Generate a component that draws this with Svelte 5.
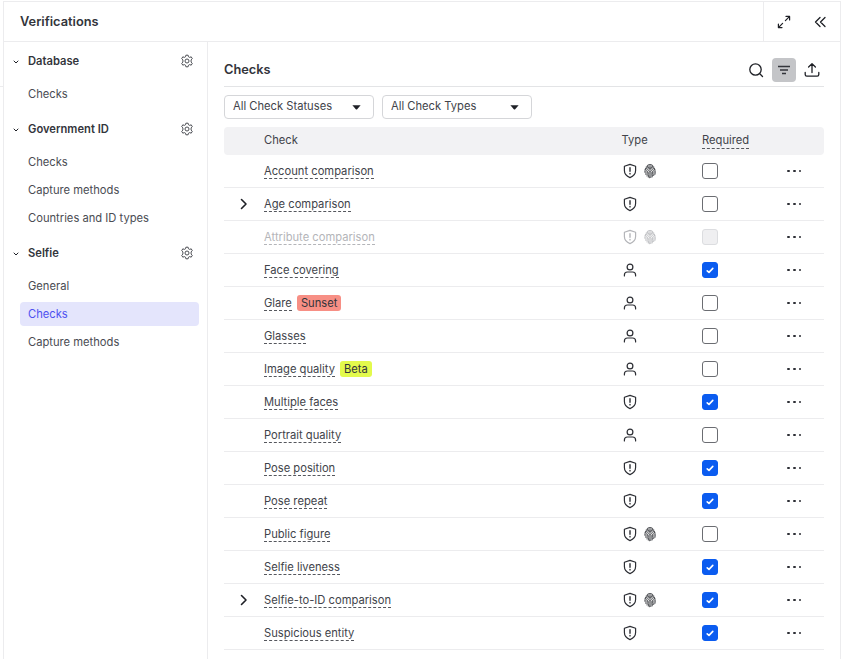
<script>
  const sections = [
    { name: 'Database', items: ['Checks'] },
    { name: 'Government ID', items: ['Checks', 'Capture methods', 'Countries and ID types'] },
    { name: 'Selfie', items: ['General', 'Checks', 'Capture methods'], active: 1 }
  ];
  const rows = [
    { n: 'Account comparison', t: 'sf' },
    { n: 'Age comparison', t: 's', exp: true },
    { n: 'Attribute comparison', t: 'sf', off: true },
    { n: 'Face covering', t: 'p', req: true },
    { n: 'Glare', t: 'p', badge: 'Sunset' },
    { n: 'Glasses', t: 'p' },
    { n: 'Image quality', t: 'p', badge: 'Beta' },
    { n: 'Multiple faces', t: 's', req: true },
    { n: 'Portrait quality', t: 'p' },
    { n: 'Pose position', t: 's', req: true },
    { n: 'Pose repeat', t: 's', req: true },
    { n: 'Public figure', t: 'sf' },
    { n: 'Selfie liveness', t: 's', req: true },
    { n: 'Selfie-to-ID comparison', t: 'sf', req: true, exp: true },
    { n: 'Suspicious entity', t: 's', req: true }
  ];
</script>

{#snippet shield()}
  <svg class="ic" width="16" height="16" viewBox="0 0 16 16" fill="none" stroke="currentColor" stroke-width="1.2" stroke-linejoin="round" stroke-linecap="round">
    <path d="M8 1.4 13.6 3.2V7.6C13.6 11 11.2 13.4 8 14.6 4.8 13.4 2.4 11 2.4 7.6V3.2Z" />
    <path d="M8 4.8V8.2M8 10.4V10.9" stroke-width="1.4" />
  </svg>
{/snippet}
{#snippet finger()}
  <svg class="ic" width="16" height="16" viewBox="0 0 16 16" fill="none" stroke="currentColor" stroke-width="0.8" stroke-linecap="round">
    <path d="M4.4 3.4C5.3 2.2 6.6 1.5 8 1.5S10.7 2.2 11.6 3.4" />
    <path d="M3 6.4C3.7 4.2 5.7 2.9 8 2.9S12.3 4.2 13 6.4" />
    <path d="M2.7 9.2C2.6 6.2 5 4.2 8 4.2S13.4 6.2 13.3 9.2C13.3 10 13.2 10.7 13 11.4" />
    <path d="M3.9 11.6C3.8 10.7 3.9 9.4 4 8.5 4.2 6.7 5.9 5.5 8 5.5S11.8 6.7 12 8.5C12.1 10 12 11.3 11.7 12.6" />
    <path d="M5.1 13.1C5.3 11.5 5.2 10 5.4 8.8 5.6 7.6 6.7 6.8 8 6.8S10.4 7.6 10.6 8.8C10.8 10.6 10.6 12.4 10.2 14" />
    <path d="M6.4 14.2C6.8 12.4 6.6 10.6 6.8 9.2 6.9 8.6 7.4 8.1 8 8.1S9.1 8.6 9.2 9.2C9.4 11 9.2 12.9 8.8 14.6" />
    <path d="M7.6 14.8C8 12.9 8 11 8 9.4" />
  </svg>
{/snippet}
{#snippet person()}
  <svg class="ic" width="16" height="16" viewBox="0 0 16 16" fill="none" stroke="currentColor" stroke-width="1.2" stroke-linecap="round">
    <circle cx="8" cy="5" r="2.9" />
    <path d="M2.4 14V13C2.4 11.2 3.6 10 5.4 10H10.6C12.4 10 13.6 11.2 13.6 13V14" />
  </svg>
{/snippet}
{#snippet gear()}
  <svg width="14" height="14" viewBox="0 0 14 14" fill="none" stroke="#4d4f55" stroke-width="1" stroke-linejoin="round">
    <path d="M5.9 1.2H8.1L8.5 2.8 9.7 3.4 11.2 2.8 12.3 4.7 11.1 5.9V8.1L12.3 9.3 11.2 11.2 9.7 10.6 8.5 11.2 8.1 12.8H5.9L5.5 11.2 4.3 10.6 2.8 11.2 1.7 9.3 2.9 8.1V5.9L1.7 4.7 2.8 2.8 4.3 3.4 5.5 2.8Z" />
    <circle cx="7" cy="7" r="2" />
  </svg>
{/snippet}
{#snippet caret()}
  <svg width="9" height="5" viewBox="0 0 9 5"><path d="M0.4 0.3H8.6L5.2 4.2Q4.5 4.9 3.8 4.2Z" fill="#1e2026" /></svg>
{/snippet}

<div class="page">
  <span class="stray"></span>
  <div class="panel">
    <header class="top">
      <h1>Verifications</h1>
      <div class="top-actions">
        <button aria-label="Expand">
          <svg width="14" height="14" viewBox="0 0 14 14" fill="none" stroke="#1e2026" stroke-width="1.2" stroke-linecap="round" stroke-linejoin="round">
            <path d="M8.4 5.6 12.6 1.4M9 1.4H12.6V5M5.6 8.4 1.4 12.6M1.4 9V12.6H5" />
          </svg>
        </button>
        <button aria-label="Collapse">
          <svg width="14" height="14" viewBox="0 0 14 14" fill="none" stroke="#1e2026" stroke-width="1.3" stroke-linecap="round" stroke-linejoin="round">
            <path d="M7 2.5 2.5 7 7 11.5M12 2.5 7.5 7 12 11.5" />
          </svg>
        </button>
      </div>
    </header>
    <div class="body">
      <aside>
        {#each sections as s}
          <section>
            <div class="sec-head">
              <svg class="chev" width="6" height="4" viewBox="0 0 6 4" fill="none" stroke="#1e2026" stroke-width="1" stroke-linecap="round" stroke-linejoin="round"><path d="M1 1 3 3 5 1" /></svg>
              <strong>{s.name}</strong>
              {@render gear()}
            </div>
            {#each s.items as it, i}
              <div class="nav" class:active={s.active === i}>{it}</div>
            {/each}
          </section>
        {/each}
      </aside>
      <main>
        <div class="title">
          <h2>Checks</h2>
          <div class="tools">
            <span class="tool" aria-label="Search">
              <svg width="16" height="16" viewBox="0 0 16 16" fill="none" stroke="#1e2026" stroke-width="1.3" stroke-linecap="round"><circle cx="7.5" cy="7.5" r="5.7" /><path d="M11.8 11.8 14.5 14.5" /></svg>
            </span>
            <span class="tool on" aria-label="Filter">
              <svg width="14" height="14" viewBox="0 0 14 14" fill="none" stroke="#33353b" stroke-width="1.3"><path d="M1 3.5H13M3 7H11M5 10.5H9" /></svg>
            </span>
            <span class="tool" aria-label="Export">
              <svg width="16" height="16" viewBox="0 0 16 16" fill="none" stroke="#1e2026" stroke-width="1.3" stroke-linecap="round" stroke-linejoin="round"><path d="M8 10.5V1.8M4.6 5 8 1.6 11.4 5M1.2 10.5V12.6C1.2 13.6 1.9 14.2 2.8 14.2H13.2C14.1 14.2 14.8 13.6 14.8 12.6V10.5" /></svg>
            </span>
          </div>
        </div>
        <div class="filters">
          <div class="select"><span class="sel-text">All Check Statuses</span>{@render caret()}</div>
          <div class="select"><span class="sel-text">All Check Types</span>{@render caret()}</div>
        </div>
        <div class="grid thead">
          <span></span>
          <span>Check</span>
          <span>Type</span>
          <span><span class="dash">Required</span></span>
          <span></span>
        </div>
        {#each rows as r}
          <div class="grid row" class:off={r.off}>
            <span class="exp">
              {#if r.exp}
                <svg width="8" height="12" viewBox="0 0 8 12" fill="none" stroke="#1e2026" stroke-width="1.6" stroke-linecap="round" stroke-linejoin="round"><path d="M1.5 1.5 6 6 1.5 10.5" /></svg>
              {/if}
            </span>
            <span class="name">
              <span class="dash">{r.n}</span>
              {#if r.badge}<span class="badge {r.badge.toLowerCase()}">{r.badge}</span>{/if}
            </span>
            <span class="types">
              {#if r.t === 'p'}{@render person()}{:else}{@render shield()}{/if}
              {#if r.t === 'sf'}{@render finger()}{/if}
            </span>
            <span class="reqcell">
              <span class="box" class:checked={r.req} class:dis={r.off}>
                {#if r.req}
                  <svg width="8" height="7" viewBox="0 0 8 7" fill="none" stroke="#fff" stroke-width="1.6" stroke-linecap="round" stroke-linejoin="round"><path d="M1.2 3.8 3 5.4 6.8 1.4" /></svg>
                {/if}
              </span>
            </span>
            <span class="more"><i></i><i></i><i></i></span>
          </div>
        {/each}
      </main>
    </div>
  </div>
</div>

<style>
  :global(body) { margin: 0; background: #fff; }
  .page {
    position: relative;
    width: 841px;
    height: 659px;
    overflow: hidden;
    padding: 1px 0 0 3px;
    box-sizing: border-box;
    font-family: Inter, "Liberation Sans", sans-serif;
    font-size: 11.2px;
    color: #41434a;
  }
  .stray { position: absolute; left: 0; top: 86px; width: 3px; height: 1px; background: #ececee; }
  .panel {
    width: 838px;
    height: 700px;
    box-sizing: border-box;
    border: 1px solid #ececee;
  }
  .top {
    height: 40px;
    box-sizing: border-box;
    display: flex;
    align-items: center;
    justify-content: space-between;
    border-bottom: 1px solid #ececee;
  }
  h1 { margin: 0 0 0 16px; font-size: 12.8px; font-weight: 600; color: #33353b; }
  .top-actions { display: flex; height: 39px; border-left: 1px solid #ececee; width: 77px; box-sizing: border-box; }
  .top-actions button {
    border: 0; background: none; padding: 0; height: 39px; display: flex; align-items: center; justify-content: center;
  }
  .top-actions button:first-child { width: 40px; }
  .top-actions button:last-child { width: 32px; }
  .body { display: flex; height: 660px; }
  aside {
    width: 204px;
    box-sizing: border-box;
    border-right: 1px solid #ececee;
    padding: 7px 0 0 16px;
    flex: none;
  }
  section { margin-bottom: 11px; }
  .sec-head {
    position: relative;
    height: 24px;
    margin-bottom: 9px;
    display: flex;
    align-items: center;
    padding-left: 8px;
    width: 179px;
    box-sizing: border-box;
    justify-content: space-between;
    padding-right: 5px;
  }
  .sec-head strong { font-weight: 600; font-size: 11.2px; color: #33353b; }
  .chev { position: absolute; left: -7px; top: 11px; }
  .nav {
    height: 24px;
    line-height: 24px;
    margin-bottom: 4px;
    padding-left: 8px;
    width: 179px;
    box-sizing: border-box;
    border-radius: 4px;
    color: #4a4c53;
  }
  .nav.active { background: #e4e5fc; color: #4f52f0; }
  main { flex: 1; padding: 0 16px; min-width: 0; }
  .title {
    height: 45px;
    box-sizing: border-box;
    display: flex;
    align-items: center;
    justify-content: space-between;
    border-bottom: 1px solid #e3e4e6;
  }
  h2 { margin: 10px 0 0; font-size: 12.8px; font-weight: 600; color: #33353b; }
  .tools { display: flex; gap: 4px; margin: 12px 0 0; }
  .tool { width: 24px; height: 24px; display: flex; align-items: center; justify-content: center; border-radius: 4px; }
  .tool.on { background: #c4c5c8; }
  .filters { display: flex; gap: 8px; padding-top: 8px; }
  .select {
    width: 150px;
    height: 24px;
    box-sizing: border-box;
    border: 1px solid #d5d6d9;
    border-radius: 4px;
    padding: 0 12px 0 8px;
    display: flex;
    align-items: center;
    justify-content: space-between;
    color: #41434a;
  }
  .sel-text { margin-bottom: 2px; }
  .grid {
    display: grid;
    grid-template-columns: 40px 357.5px 80.5px 74px 48px;
    align-items: center;
  }
  .thead {
    margin-top: 8px;
    height: 28px;
    box-sizing: border-box;
    padding-bottom: 3px;
    background: #f2f2f4;
    border-radius: 4px;
  }
  .row { height: 33px; box-sizing: border-box; border-bottom: 1px solid #ececee; }
  .dash { border-bottom: 1px dashed #55575d; padding-bottom: 1px; }
  .name { display: flex; align-items: center; gap: 5px; }
  .name .dash { padding-bottom: 0; }
  .exp { display: flex; padding-left: 16px; }
  .off .name, .off .types { color: #b4b5b9; }
  .off .dash { border-bottom-color: #b4b5b9; }
  .badge { padding: 0 4px; height: 16px; line-height: 16px; border-radius: 3px; color: #33353b; }
  .sunset { background: #f78f85; }
  .beta { background: #e3fa4c; }
  .types { display: flex; align-items: center; gap: 4px; color: #2c2e34; }
  .ic { display: block; }
  .box {
    display: flex;
    align-items: center;
    justify-content: center;
    width: 16px;
    height: 16px;
    box-sizing: border-box;
    border: 1px solid #6b6d72;
    border-radius: 3px;
  }
  .reqcell { display: block; }
  .checked { background: #0b5cf0; border-color: #0b5cf0; }
  .dis { background: #efeff1; border-color: #dcdde0; }
  .more { display: flex; gap: 3px; padding-left: 11px; }
  .more i { width: 2.8px; height: 2.8px; border-radius: 50%; background: #2c2e34; }
</style>
